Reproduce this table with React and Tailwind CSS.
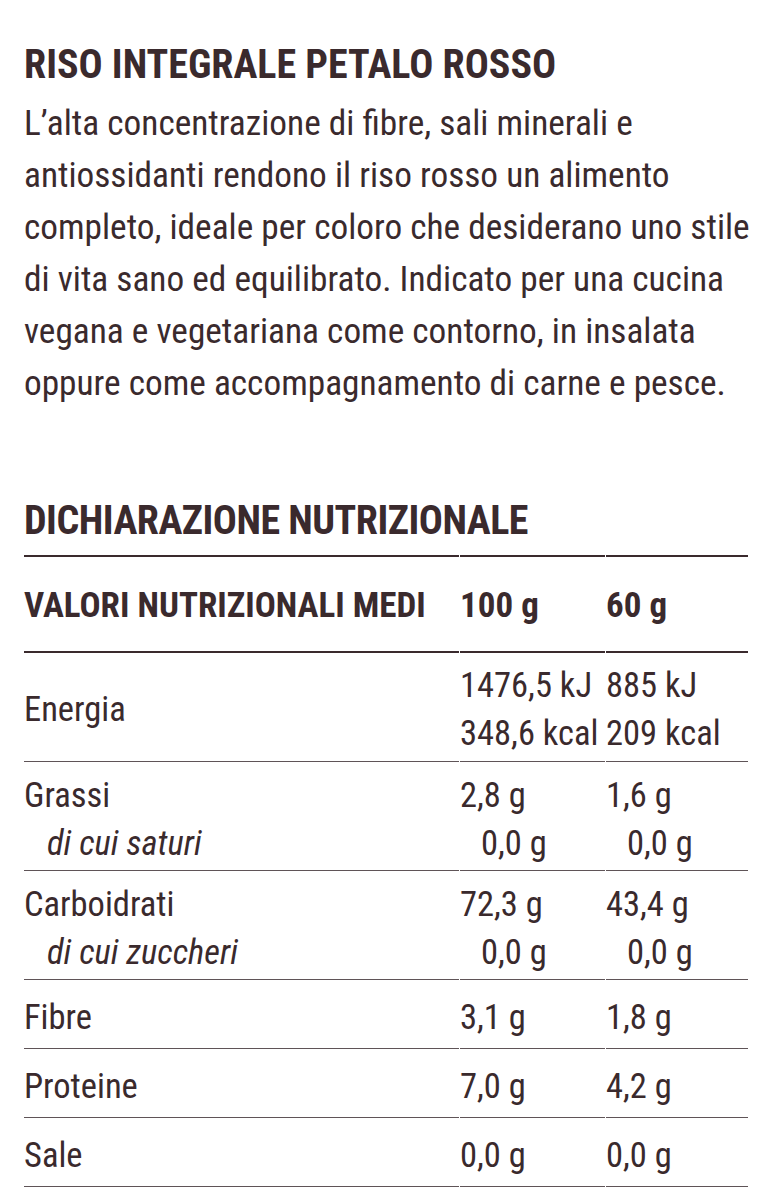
import React from "react";

const font = "font-['Roboto',sans-serif] [font-stretch:75%]";
const grid = "grid grid-cols-[435px_145px_142px] gap-x-px";

const bodyLines = [
  "L’alta concentrazione di fibre, sali minerali e",
  "antiossidanti rendono il riso rosso un alimento",
  "completo, ideale per coloro che desiderano uno stile",
  "di vita sano ed equilibrato. Indicato per una cucina",
  "vegana e vegetariana come contorno, in insalata",
  "oppure come accompagnamento di carne e pesce.",
];

const rows = [
  {
    type: "energy",
    label: [{ t: "Energia" }],
    a: ["1476,5 kJ", "348,6 kcal"],
    b: ["885 kJ", "209 kcal"],
  },
  {
    type: "double",
    label: [{ t: "Grassi" }, { t: "di cui saturi", sub: true }],
    a: ["2,8 g", "0,0 g"],
    b: ["1,6 g", "0,0 g"],
  },
  {
    type: "double",
    label: [{ t: "Carboidrati" }, { t: "di cui zuccheri", sub: true }],
    a: ["72,3 g", "0,0 g"],
    b: ["43,4 g", "0,0 g"],
  },
  { type: "single", label: [{ t: "Fibre" }], a: ["3,1 g"], b: ["1,8 g"] },
  { type: "single", label: [{ t: "Proteine" }], a: ["7,0 g"], b: ["4,2 g"] },
  { type: "single", label: [{ t: "Sale" }], a: ["0,0 g"], b: ["0,0 g"] },
];

const pad = {
  energy: "pt-[8px] pb-[4px]",
  double: "pt-[9px] pb-[3px]",
  single: "pt-[13px] pb-[7px]",
};

function ValueCell({ vals, type }) {
  return (
    <div className={`border-b border-[#5f5457] ${pad[type]}`}>
      {vals.map((v, i) => (
        <div
          key={i}
          className={`whitespace-nowrap ${type === "double" && i > 0 ? "pl-[21px]" : ""}`}
        >
          {v}
        </div>
      ))}
    </div>
  );
}

function LabelCell({ items, type }) {
  if (type === "energy") {
    return (
      <div className="border-b border-[#5f5457] flex items-center pt-[4px]">
        {items[0].t}
      </div>
    );
  }
  return (
    <div className={`border-b border-[#5f5457] ${pad[type]}`}>
      {items.map((l, i) => (
        <div key={i} className={`whitespace-nowrap ${l.sub ? "pl-[23px] italic" : ""}`}>
          {l.t}
        </div>
      ))}
    </div>
  );
}

export default function App() {
  return (
    <div className={`${font} bg-white text-[#3a2a2d] w-[766px] min-h-[1196px] px-[24px] pt-[39px]`}>
      <h1 className="text-[40px] leading-[52px] font-bold whitespace-nowrap">
        RISO INTEGRALE PETALO ROSSO
      </h1>
      <p className="mt-[6px] text-[35.3px] leading-[52px]">
        {bodyLines.map((l, i) => (
          <span key={i} className="block whitespace-nowrap">
            {l}
          </span>
        ))}
      </p>
      <h2 className="mt-[86px] text-[40px] leading-[52px] font-bold tracking-[-0.5px] whitespace-nowrap">
        DICHIARAZIONE NUTRIZIONALE
      </h2>
      <div className="mt-[8px] text-[34.5px] leading-[48px]">
        <div className={grid}>
          {["VALORI NUTRIZIONALI MEDI", "100 g", "60 g"].map((t) => (
            <div
              key={t}
              className="border-y-2 border-[#3a2a2d] h-[98px] flex items-center pt-[3px] text-[35px] font-bold whitespace-nowrap"
            >
              {t}
            </div>
          ))}
        </div>
        {rows.map((r, idx) => (
          <div key={idx} className={grid}>
            <LabelCell items={r.label} type={r.type} />
            <ValueCell vals={r.a} type={r.type} />
            <ValueCell vals={r.b} type={r.type} />
          </div>
        ))}
      </div>
    </div>
  );
}
